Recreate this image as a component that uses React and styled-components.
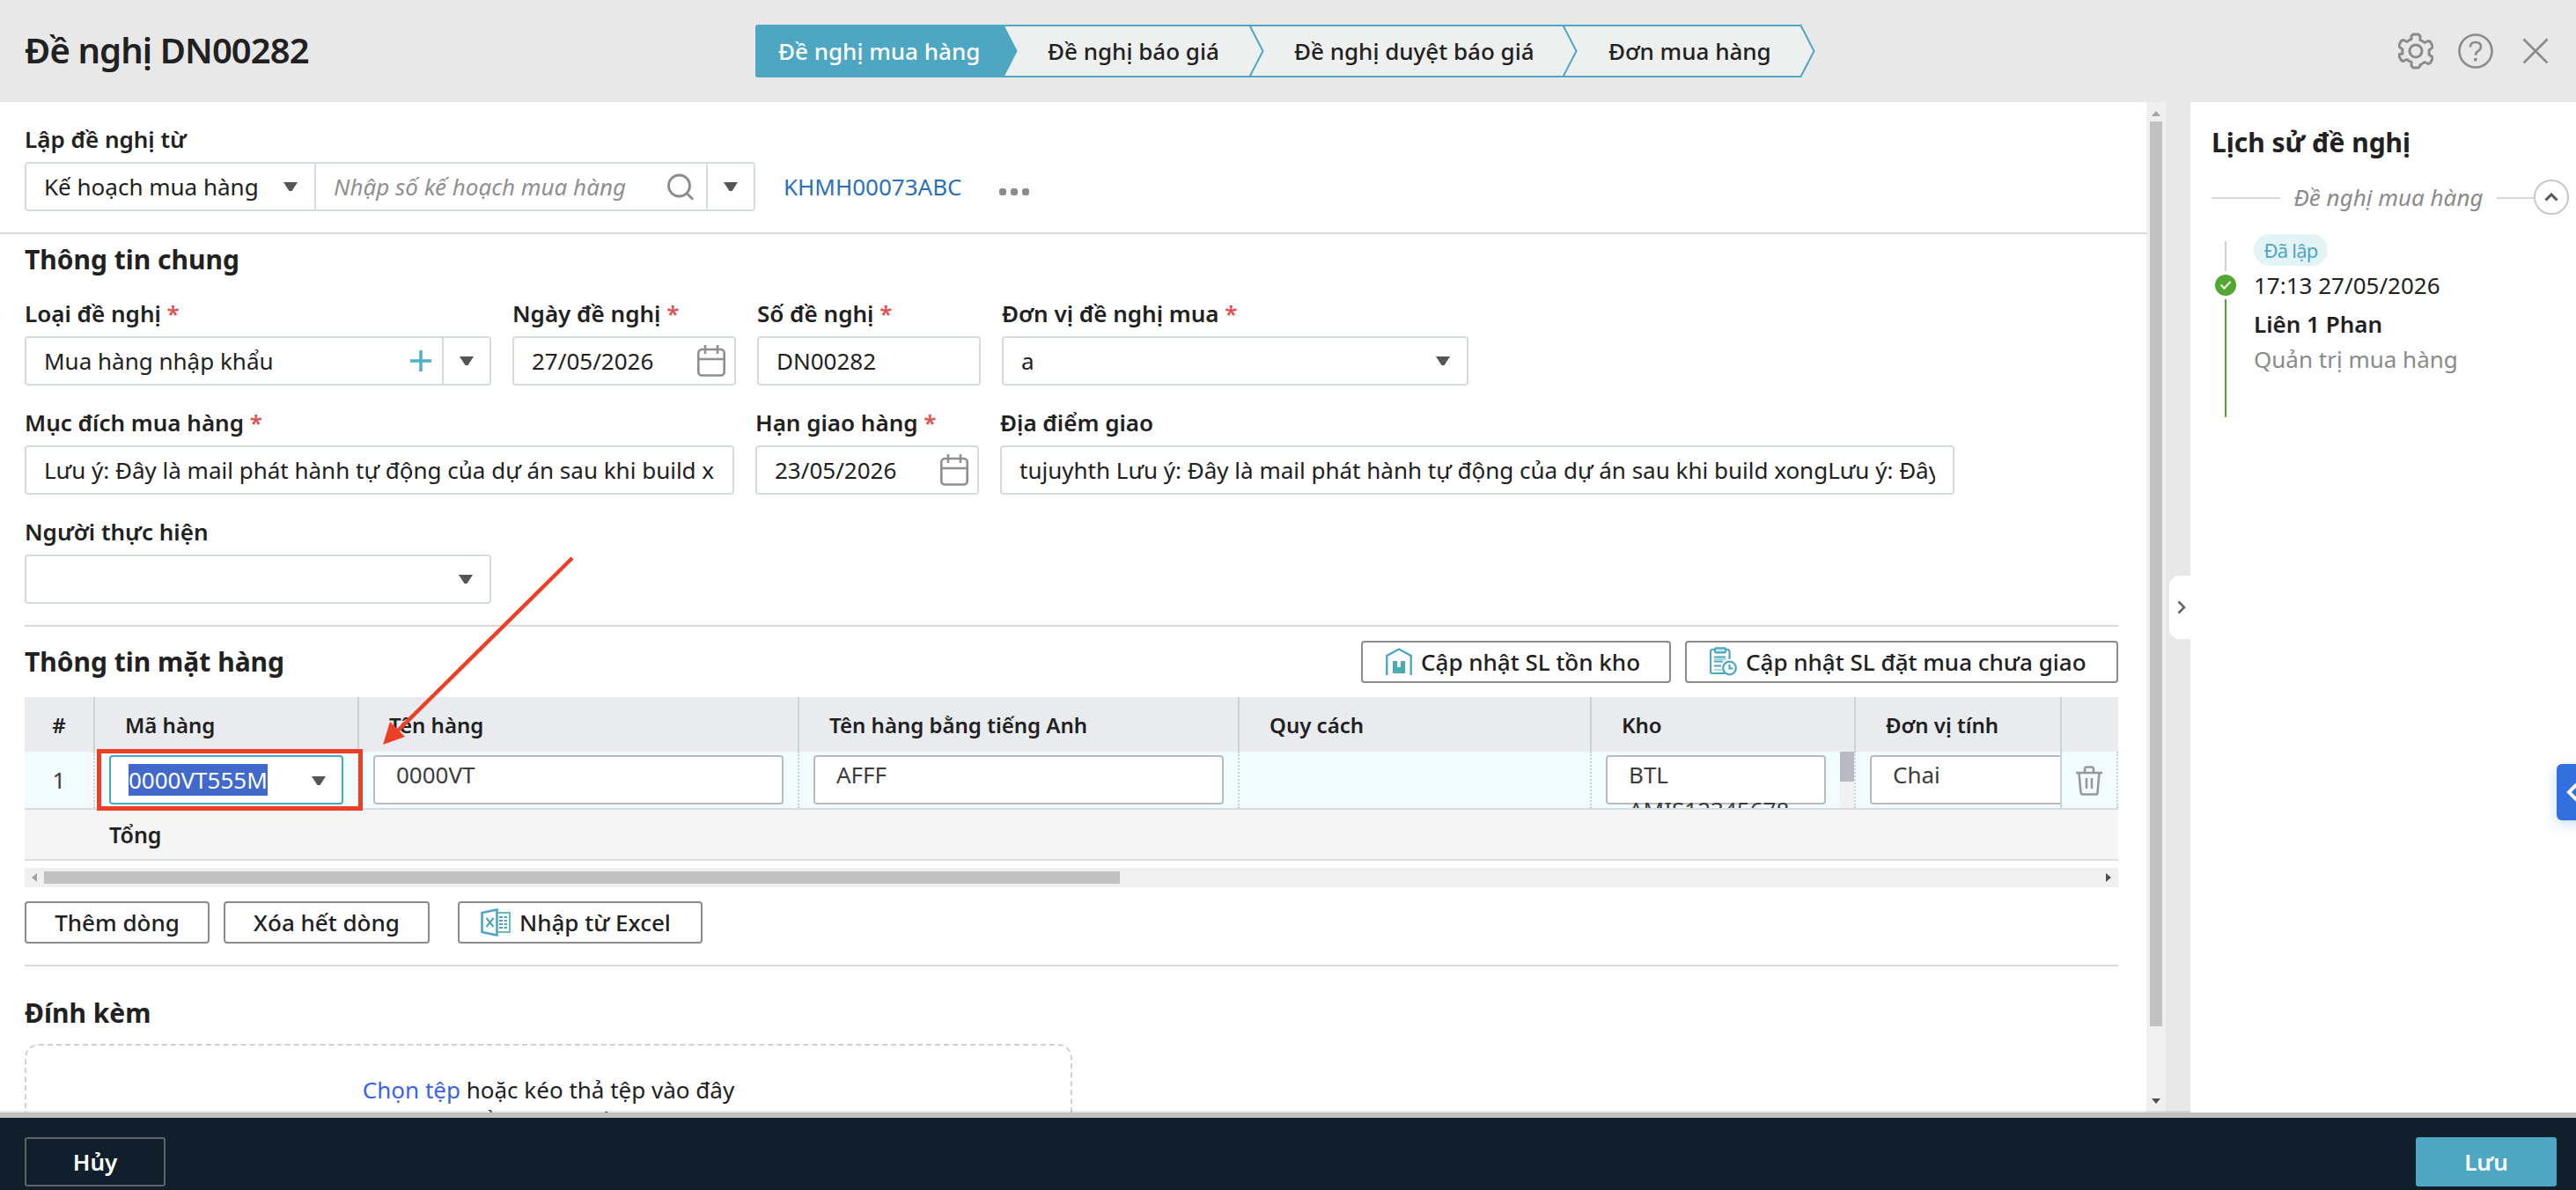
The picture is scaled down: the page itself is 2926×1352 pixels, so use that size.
import React from "react";
import styled, { createGlobalStyle } from "styled-components";

const GlobalStyle = createGlobalStyle`
  * {
    box-sizing: border-box;
  }
  body {
    margin: 0;
    font-family: "Noto Sans", "Open Sans", sans-serif;
    font-size: 26px;
    line-height: 36px;
    color: #212121;
    overflow: hidden;
  }
`;

const Page = styled.div`
  width: 2926px;
  height: 1352px;
  display: flex;
  flex-direction: column;
  background: #e8e8e8;
  position: relative;
  overflow: hidden;
`;

/* ---------- header ---------- */

const Header = styled.header`
  height: 116px;
  flex: none;
  display: flex;
  align-items: center;
  padding: 0 26px 0 28px;
`;

const PageTitle = styled.h1`
  margin: 0;
  width: 830px;
  font-size: 40px;
  line-height: 56px;
  font-weight: 600;
  letter-spacing: -0.9px;
  padding-bottom: 3px;
`;

const Steps = styled.div`
  display: flex;
  height: 60px;
`;

const Step = styled.div`
  width: ${(p) => p.$width}px;
  height: 60px;
  padding-left: ${(p) => p.$pad}px;
  line-height: 57px;
  white-space: nowrap;
  color: ${(p) => (p.$active ? "#fff" : "#212121")};
  font-weight: 500;
  background: ${(p) => (p.$active ? "#4da6c2" : "#eef0ef")};
  border: solid #4da6c2;
  border-width: 2px 0;
  border-radius: ${(p) => (p.$active ? "3px 0 0 3px" : "0")};
`;

const StepTip = styled.svg`
  width: 17px;
  height: 60px;
  flex: none;
  background: ${(p) => p.$bg};
`;

const HeaderIcons = styled.div`
  margin-left: auto;
  display: flex;
  align-items: center;
  gap: 28px;

  svg {
    display: block;
  }
`;

/* ---------- body ---------- */

const Body = styled.div`
  height: 1148px;
  flex: none;
  display: flex;
  overflow: hidden;
`;

const Main = styled.main`
  width: 2438px;
  flex: none;
  background: #fff;
  overflow: hidden;
`;

const SourceSection = styled.section`
  padding: 24px 0 24px 28px;
  border-bottom: 2px solid #dadada;
`;

const Section = styled.section`
  margin: 0 32px 0 28px;
  padding-top: ${(p) => p.$top}px;
  padding-bottom: ${(p) => p.$bottom || 0}px;
  border-bottom: ${(p) => (p.$last ? "none" : "2px solid #dadada")};
`;

const SectionTitle = styled.h2`
  margin: 0;
  font-size: 30px;
  line-height: 40px;
  font-weight: 700;
`;

const FormGrid = styled.div`
  margin-top: 23px;
  display: flex;
  flex-direction: column;
  gap: 24px;
`;

const FormRow = styled.div`
  display: flex;
  gap: ${(p) => p.$gap || 24}px;
`;

const FieldBox = styled.div`
  width: ${(p) => p.$width}px;
`;

const Label = styled.div`
  font-weight: 600;
  margin-bottom: 8px;
  white-space: nowrap;

  span {
    color: #e0504f;
  }
`;

const Control = styled.div`
  width: ${(p) => (p.$width ? p.$width + "px" : "100%")};
  height: 56px;
  display: flex;
  align-items: center;
  border: 2px solid #d5dce0;
  border-radius: ${(p) => p.$radius || "4px"};
  margin-left: ${(p) => p.$shift || 0}px;
  background: #fff;
  padding-left: 20px;
`;

const Value = styled.div`
  flex: 1;
  min-width: 0;
  overflow: hidden;
  white-space: nowrap;
  font-style: ${(p) => (p.$placeholder ? "italic" : "normal")};
  color: ${(p) => (p.$placeholder ? "#8f8f8f" : "#212121")};
  margin-right: ${(p) => p.$right || 0}px;
`;

const CaretCell = styled.div`
  width: 54px;
  height: 52px;
  flex: none;
  display: flex;
  align-items: center;
  justify-content: center;
  border-left: ${(p) => (p.$split ? "2px solid #d5dce0" : "none")};
`;

const IconSlot = styled.div`
  flex: none;
  display: flex;
  margin-right: ${(p) => p.$right || 0}px;
`;

const SourceRow = styled.div`
  display: flex;
  align-items: center;
`;

const PlanLink = styled.a`
  color: #2c70b9;
  margin-left: 32px;
`;

const Dots = styled.div`
  display: flex;
  gap: 5px;
  margin: 12px 0 0 42px;

  i {
    width: 8px;
    height: 8px;
    border-radius: 3px;
    background: #8c8c8c;
  }
`;

/* ---------- items table ---------- */

const SectionHead = styled.div`
  height: 48px;
  display: flex;
  align-items: center;
  justify-content: space-between;
`;

const ButtonRow = styled.div`
  display: flex;
  gap: 16px;
  margin-top: ${(p) => p.$top || 0}px;
`;

const Button = styled.button`
  width: ${(p) => p.$width}px;
  height: 48px;
  margin: 0 0 0 ${(p) => p.$left || 0}px;
  padding: 0 0 0 ${(p) => p.$pad || 0}px;
  display: flex;
  align-items: center;
  justify-content: ${(p) => (p.$pad ? "flex-start" : "center")};
  gap: 10px;
  background: #fff;
  border: 2px solid #8b8b8b;
  border-radius: 4px;
  color: #212121;
  font: 500 26px/36px "Noto Sans", "Open Sans", sans-serif;
  white-space: nowrap;
`;

const Table = styled.div`
  margin-top: 16px;
`;

const TableRow = styled.div`
  display: grid;
  grid-template-columns: 80px 300px 500px 500px 400px 300px 234px 64px;
`;

const HeadCell = styled.div`
  height: 62px;
  line-height: 64px;
  padding-left: ${(p) => (p.$center ? 0 : 34)}px;
  text-align: ${(p) => (p.$center ? "center" : "left")};
  font-weight: 600;
  font-size: 24px;
  background: #e9ebee;
  border-right: ${(p) => (p.$end ? "none" : "2px solid #cbd2d6")};
`;

const Cell = styled.div`
  height: 64px;
  display: flex;
  padding: 4px 0 0 ${(p) => (p.$center ? 0 : 16)}px;
  justify-content: ${(p) => (p.$center ? "center" : "flex-start")};
  line-height: 56px;
  color: #3c3c3c;
  background: #f0fcff;
  border-right: 2px ${(p) => (p.$solid ? "solid" : "dotted")} #cbd2d6;
  overflow: hidden;
`;

const CellInput = styled.div`
  width: ${(p) => p.$width}px;
  height: 56px;
  flex: none;
  padding: ${(p) => (p.$active ? "8px 0 0 20px" : "0 0 0 24px")};
  display: ${(p) => (p.$active ? "flex" : "block")};
  line-height: 40px;
  color: #3c3c3c;
  background: #fff;
  border: 2px solid ${(p) => (p.$active ? "#4da6c2" : "#bbb")};
  border-radius: 4px;
`;

const Selected = styled.span`
  height: 36px;
  line-height: 36px;
  margin-right: auto;
  color: #fff;
  background: #4169cc;
`;

const CellCaret = styled.div`
  margin: 14px 18px 0 0;
  line-height: 0;
`;

const CellScroll = styled.div`
  width: 16px;
  height: 64px;
  margin: -4px 0 0 auto;
  background: #f1f1f1;

  &::before {
    content: "";
    display: block;
    height: 34px;
    background: #b6bac3;
  }
`;

const TotalRow = styled.div`
  height: 60px;
  padding-left: 96px;
  border: solid #d5dce0;
  border-width: 2px 0;
  border-bottom-color: #dedede;
  background: #f5f5f5;
  line-height: 56px;
  font-weight: 600;
  font-size: 25px;
`;

const HScroll = styled.div`
  height: 22px;
  margin-top: 8px;
  background: #f0f0f0;
  display: flex;
  align-items: center;
  padding: 0 8px;
`;

const HThumb = styled.div`
  width: 1222px;
  height: 14px;
  margin: 0 auto 0 8px;
  background: #c1c1c1;
`;

const DropZone = styled.div`
  width: 1190px;
  height: 160px;
  margin-top: 15px;
  padding-top: 32px;
  border: 2px dashed #d0d0d0;
  border-radius: 16px;
  text-align: center;

  a {
    color: #3a62e8;
  }
`;

/* ---------- vertical scrollbar + history panel ---------- */

const VScroll = styled.div`
  width: 22px;
  flex: none;
  background: #f0f0f0;
  display: flex;
  flex-direction: column;
  align-items: center;
  padding: 10px 0;
`;

const VThumb = styled.div`
  width: 14px;
  height: 1028px;
  margin: 6px 0 auto;
  background: #c1c1c1;
`;

const Gutter = styled.div`
  width: 28px;
  flex: none;
  display: flex;
  align-items: flex-start;
  justify-content: flex-end;
  padding-top: 538px;
`;

const CollapseHandle = styled.div`
  width: 24px;
  height: 72px;
  border-radius: 12px 0 0 12px;
  background: #fff;
  display: flex;
  align-items: center;
  padding-left: 9px;
`;

const History = styled.aside`
  flex: 1;
  background: #fff;
  padding: 26px 8px 0 24px;
`;

const HistoryGroup = styled.div`
  height: 40px;
  margin-top: 22px;
  display: flex;
  align-items: center;
  color: #8a8a8a;
  font-style: italic;
  white-space: nowrap;
`;

const Line = styled.div`
  width: ${(p) => p.$width}px;
  height: 2px;
  margin-top: 2px;
  background: #d8d8d8;
`;

const GroupName = styled.div`
  width: 246px;
  text-align: center;
  flex: none;
`;

const CircleButton = styled.div`
  width: 40px;
  height: 40px;
  border: 2px solid #c8c8c8;
  border-radius: 50%;
  display: flex;
  align-items: center;
  justify-content: center;
`;

const Timeline = styled.div`
  display: flex;
  margin-top: 22px;
`;

const Rail = styled.div`
  width: 32px;
  padding-top: 8px;
  display: flex;
  flex-direction: column;
  align-items: center;
  margin-right: 16px;
`;

const RailLine = styled.div`
  width: 2px;
  height: ${(p) => p.$height}px;
  background: ${(p) => p.$color};
`;

const Events = styled.div`
  display: flex;
  flex-direction: column;
  align-items: flex-start;
`;

const Badge = styled.div`
  width: 84px;
  height: 36px;
  border-radius: 18px;
  background: #e4f3f6;
  color: #4da6c2;
  font-size: 22px;
  letter-spacing: -0.8px;
  text-align: center;
`;

const EventLine = styled.div`
  margin-top: ${(p) => p.$top}px;
  font-weight: ${(p) => p.$weight || 400};
  color: ${(p) => p.$color || "#212121"};
`;

/* ---------- footer ---------- */

const Footer = styled.footer`
  height: 88px;
  flex: none;
  border-top: 6px solid #c0c0c0;
  background: #111f2d;
  display: flex;
  justify-content: space-between;
  padding: 22px 22px 0 28px;
`;

const FooterButton = styled.button`
  width: 160px;
  height: 56px;
  border: 2px solid ${(p) => (p.$primary ? "#4da6c2" : "#5d6467")};
  border-radius: 3px;
  background: ${(p) => (p.$primary ? "#4da6c2" : "transparent")};
  color: #fff;
  font: 600 26px/36px "Noto Sans", "Open Sans", sans-serif;
`;

const SideTab = styled.div`
  position: absolute;
  left: 2904px;
  top: 868px;
  width: 40px;
  height: 64px;
  border-radius: 6px;
  background: #3370de;
  box-shadow: 0 4px 16px rgba(51, 112, 222, 0.25);
  display: flex;
  align-items: center;
  padding-left: 9px;
`;

const FooterShade = styled.div`
  position: absolute;
  left: 0;
  top: 1262px;
  width: 2488px;
  height: 2px;
  background: rgba(0, 0, 0, 0.09);
`;

/* red marker drawn over the table */
const Highlight = styled.div`
  position: absolute;
  left: 110px;
  top: 851px;
  width: 302px;
  height: 70px;
  border: 5px solid #ec4026;
`;

const Arrow = styled.svg`
  position: absolute;
  left: 425px;
  top: 625px;
`;

/* ---------- icons ---------- */

const Caret = () => (
  <svg width="16" height="10" viewBox="0 0 16 10">
    <path d="M0 0h16L9.5 10h-3z" fill="#555" />
  </svg>
);

const GearIcon = () => (
  <svg width="40" height="42" viewBox="0 0 40 42" fill="none" stroke="#8b8b8b" strokeWidth="3" strokeLinejoin="round">
    <path d="M17 2h6l2 2v4.500q3 1 5 3l4-2 2.500 1 2.500 4.500-.5 2.500-3.500 2.500q.5 3 0 5l3.500 2.500.5 2.500-2.500 4.500-2.500 1-4-2q-2 2-5 3V38l-2 2h-6l-2-2v-4.500q-3-1-5-3l-4 2-2.500-1-2.500-4.500.5-2.500L5 24q-.5-3 0-5l-3.500-2.500L1 14l2.500-4.500 2.500-1 4 2q2-2 5-3V4z" />
    <circle cx="20" cy="21" r="7" />
  </svg>
);

const HelpIcon = () => (
  <svg width="40" height="40" viewBox="0 0 40 40" fill="none" stroke="#8b8b8b" strokeWidth="2.600">
    <circle cx="20" cy="20" r="18.500" />
    <path d="M14 15.500q0-5.500 6-5.500t6 5q0 3-3 4.800-3 1.700-3 5" />
    <rect x="18.200" y="28" width="3.400" height="3.400" fill="#8b8b8b" stroke="none" />
  </svg>
);

const CloseIcon = () => (
  <svg width="40" height="40" viewBox="0 0 40 40" stroke="#8b8b8b" strokeWidth="2.600">
    <path d="M6.500 6.500l27 27M33.500 6.500l-27 27" />
  </svg>
);

const SearchIcon = () => (
  <svg width="32" height="32" viewBox="0 0 32 32" fill="none" stroke="#8b8b8b" strokeWidth="2.800">
    <circle cx="14.500" cy="15" r="12" />
    <path d="M23 23.500l7 7" />
  </svg>
);

const PlusIcon = () => (
  <svg width="24" height="24" viewBox="0 0 24 24" stroke="#4fb0c8" strokeWidth="3.500">
    <path d="M12 0v24M0 12h24" />
  </svg>
);

const CalendarIcon = () => (
  <svg width="32" height="36" viewBox="0 0 32 36" fill="none" stroke="#8f8f8f" strokeWidth="2.600">
    <rect x="1.300" y="5" width="29.400" height="29.500" rx="4" />
    <path d="M1 16h30M9 0v10M23 0v10" />
  </svg>
);

const TrashIcon = () => (
  <svg width="30" height="50" viewBox="0 -12 30 50" fill="none" stroke="#999" strokeWidth="2.600">
    <path d="M0 8h30M10 8V4q0-2.500 2.500-2.500h5Q20 1.500 20 4v4M3.500 8l2 22.500q.2 2 2 2h15q1.800 0 2-2l2-22.500M12 14v12M18 14v12" />
  </svg>
);

const WarehouseIcon = () => (
  <svg width="30" height="32" viewBox="0 0 30 32">
    <path d="M1.300 31V9L15 1.500 28.700 9v22" fill="none" stroke="#4da6c2" strokeWidth="2.400" />
    <path d="M8 15h5v7h4v-7h5v14H8z" fill="#4baab0" />
  </svg>
);

const ClipboardIcon = () => (
  <svg width="31" height="34" viewBox="0 0 31 34" fill="none" stroke="#4da6c2" strokeWidth="2.200">
    <path d="M17 30H3q-2 0-2-2V5q0-2 2-2h17q2.500 0 2.500 2v9" />
    <rect x="6" y="1.300" width="12" height="5" rx="1" fill="#c9e8f0" />
    <path d="M5 11.500h13M5 16.500h10M5 21.500h8" />
    <path d="M5 14h14M5 26h9" stroke="#a9d8e6" />
    <circle cx="22.500" cy="24" r="7.300" fill="#fff" />
    <path d="M22.500 20v4.500h4" />
  </svg>
);

const ExcelIcon = () => (
  <svg width="34" height="32" viewBox="0 0 34 32" fill="none" stroke="#4da6c2">
    <path d="M1.500 5L18.500 1.500v29L1.500 27z" strokeWidth="2.600" />
    <path d="M19 5h14v22H19" strokeWidth="2" stroke="#6cb8c8" />
    <path d="M6.500 11l8 10M14.500 11l-8 10" strokeWidth="2.200" />
    <path d="M21 10h9M21 14h9M21 18h9M21 22h9" strokeWidth="2" strokeDasharray="4 1.500" />
  </svg>
);

const CheckDot = () => (
  <svg width="24" height="32" viewBox="0 -4 24 32">
    <circle cx="12" cy="12" r="12" fill="#54a634" />
    <path d="M6.500 11.500l4 4 7-7.500" fill="none" stroke="#dff5d6" strokeWidth="2.400" />
  </svg>
);

const ScrollArrow = ({ dir, color }) => {
  const points = {
    up: "0,6 5,0 10,6",
    down: "0,0 10,0 5,6",
    left: "6,0 0,5 6,10",
    right: "0,0 6,5 0,10",
  };
  const vertical = dir === "up" || dir === "down";
  return (
    <svg width={vertical ? 10 : 6} height={vertical ? 6 : 10}>
      <polygon points={points[dir]} fill={color} />
    </svg>
  );
};

/* ---------- data ---------- */

const steps = [
  { name: "Đề nghị mua hàng", width: 281, pad: 26, active: true },
  { name: "Đề nghị báo giá", width: 263, pad: 34 },
  { name: "Đề nghị duyệt báo giá", width: 339, pad: 34 },
  { name: "Đơn mua hàng", width: 253, pad: 35 },
];

const columns = ["Mã hàng", "Tên hàng", "Tên hàng bằng tiếng Anh", "Quy cách", "Kho", "Đơn vị tính"];

const Field = ({ label, required, width, children }) => (
  <FieldBox $width={width}>
    <Label>
      {label} {required && <span>*</span>}
    </Label>
    {children}
  </FieldBox>
);

const App = () => {
  return (
    <Page>
      <GlobalStyle />
      <Header>
        <PageTitle>Đề nghị DN00282</PageTitle>
        <Steps>
          {steps.map((step, i) => (
            <React.Fragment key={step.name}>
              <Step $width={step.width} $pad={step.pad} $active={step.active}>
                {step.name}
              </Step>
              <StepTip $bg={i < steps.length - 1 ? "#eef0ef" : "transparent"} viewBox="0 0 17 60">
                {i < steps.length - 1 && <path d="M0 1h17M0 59h17" stroke="#4da6c2" strokeWidth="2" />}
                <path d="M0 0l15.500 30L0 60" fill={step.active ? "#4da6c2" : "#eef0ef"} stroke="#4da6c2" strokeWidth="2" />
              </StepTip>
            </React.Fragment>
          ))}
        </Steps>
        <HeaderIcons>
          <GearIcon />
          <HelpIcon />
          <CloseIcon />
        </HeaderIcons>
      </Header>

      <Body>
        <Main>
          <SourceSection>
            <Label>Lập đề nghị từ</Label>
            <SourceRow>
              <Control $width={331} $radius="4px 0 0 4px">
                <Value>Kế hoạch mua hàng</Value>
                <CaretCell>
                  <Caret />
                </CaretCell>
              </Control>
              <Control $width={501} $radius="0 4px 4px 0" $shift={-2}>
                <Value $placeholder>Nhập số kế hoạch mua hàng</Value>
                <IconSlot $right={13}>
                  <SearchIcon />
                </IconSlot>
                <CaretCell $split>
                  <Caret />
                </CaretCell>
              </Control>
              <PlanLink>KHMH00073ABC</PlanLink>
              <Dots>
                <i />
                <i />
                <i />
              </Dots>
            </SourceRow>
          </SourceSection>

          <Section $top={9} $bottom={24}>
            <SectionTitle>Thông tin chung</SectionTitle>
            <FormGrid>
              <FormRow>
                <Field label="Loại đề nghị" required width={530}>
                  <Control>
                    <Value>Mua hàng nhập khẩu</Value>
                    <IconSlot $right={12}>
                      <PlusIcon />
                    </IconSlot>
                    <CaretCell $split>
                      <Caret />
                    </CaretCell>
                  </Control>
                </Field>
                <Field label="Ngày đề nghị" required width={254}>
                  <Control>
                    <Value>27/05/2026</Value>
                    <IconSlot $right={10}>
                      <CalendarIcon />
                    </IconSlot>
                  </Control>
                </Field>
                <Field label="Số đề nghị" required width={254}>
                  <Control>
                    <Value>DN00282</Value>
                  </Control>
                </Field>
                <Field label="Đơn vị đề nghị mua" required width={530}>
                  <Control>
                    <Value>a</Value>
                    <CaretCell>
                      <Caret />
                    </CaretCell>
                  </Control>
                </Field>
              </FormRow>
              <FormRow>
                <Field label="Mục đích mua hàng" required width={806}>
                  <Control>
                    <Value $right={20}>Lưu ý: Đây là mail phát hành tự động của dự án sau khi build x</Value>
                  </Control>
                </Field>
                <Field label="Hạn giao hàng" required width={254}>
                  <Control>
                    <Value>23/05/2026</Value>
                    <IconSlot $right={10}>
                      <CalendarIcon />
                    </IconSlot>
                  </Control>
                </Field>
                <Field label="Địa điểm giao" width={1084}>
                  <Control>
                    <Value $right={20}>
                      tujuyhth Lưu ý: Đây là mail phát hành tự động của dự án sau khi build xongLưu ý: Đây
                    </Value>
                  </Control>
                </Field>
              </FormRow>
              <FormRow>
                <Field label="Người thực hiện" width={530}>
                  <Control>
                    <Value />
                    <CaretCell>
                      <Caret />
                    </CaretCell>
                  </Control>
                </Field>
              </FormRow>
            </FormGrid>
          </Section>

          <Section $top={16} $bottom={24}>
            <SectionHead>
              <SectionTitle>Thông tin mặt hàng</SectionTitle>
              <ButtonRow>
                <Button $width={352} $pad={26}>
                  <WarehouseIcon />
                  Cập nhật SL tồn kho
                </Button>
                <Button $width={492} $pad={26}>
                  <ClipboardIcon />
                  Cập nhật SL đặt mua chưa giao
                </Button>
              </ButtonRow>
            </SectionHead>

            <Table>
              <TableRow>
                <HeadCell $center>#</HeadCell>
                {columns.map((name) => (
                  <HeadCell key={name}>{name}</HeadCell>
                ))}
                <HeadCell $end />
              </TableRow>
              <TableRow>
                <Cell $center>1</Cell>
                <Cell>
                  <CellInput $width={266} $active>
                    <Selected>0000VT555M</Selected>
                    <CellCaret>
                      <Caret />
                    </CellCaret>
                  </CellInput>
                </Cell>
                <Cell>
                  <CellInput $width={466}>0000VT</CellInput>
                </Cell>
                <Cell>
                  <CellInput $width={466}>AFFF</CellInput>
                </Cell>
                <Cell />
                <Cell>
                  <CellInput $width={250}>
                    BTL
                    <br />
                    AMIS12345678
                  </CellInput>
                  <CellScroll />
                </Cell>
                <Cell $solid>
                  <CellInput $width={260}>Chai</CellInput>
                </Cell>
                <Cell $center>
                  <IconSlot>
                    <TrashIcon />
                  </IconSlot>
                </Cell>
              </TableRow>
              <TotalRow>Tổng</TotalRow>
            </Table>

            <HScroll>
              <ScrollArrow dir="left" color="#a3a3a3" />
              <HThumb />
              <ScrollArrow dir="right" color="#505050" />
            </HScroll>

            <ButtonRow $top={16}>
              <Button $width={210}>Thêm dòng</Button>
              <Button $width={234}>Xóa hết dòng</Button>
              <Button $width={278} $left={16} $pad={24}>
                <ExcelIcon />
                Nhập từ Excel
              </Button>
            </ButtonRow>
          </Section>

          <Section $top={33} $last>
            <SectionTitle>Đính kèm</SectionTitle>
            <DropZone>
              <a>Chọn tệp</a> hoặc kéo thả tệp vào đây
              <br />* Tổng cộng tối đa
            </DropZone>
          </Section>
        </Main>

        <VScroll>
          <ScrollArrow dir="up" color="#a3a3a3" />
          <VThumb />
          <ScrollArrow dir="down" color="#505050" />
        </VScroll>
        <Gutter>
          <CollapseHandle>
            <svg width="10" height="16" viewBox="0 0 10 16">
              <path d="M1.500 1.500L8 8l-6.500 6.500" fill="none" stroke="#666" strokeWidth="2.600" />
            </svg>
          </CollapseHandle>
        </Gutter>

        <History>
          <SectionTitle>Lịch sử đề nghị</SectionTitle>
          <HistoryGroup>
            <Line $width={78} />
            <GroupName>Đề nghị mua hàng</GroupName>
            <Line $width={42} />
            <CircleButton>
              <svg width="16" height="10" viewBox="0 0 16 10">
                <path d="M1.500 8.500L8 2l6.500 6.500" fill="none" stroke="#555" strokeWidth="3" />
              </svg>
            </CircleButton>
          </HistoryGroup>
          <Timeline>
            <Rail>
              <RailLine $height={34} $color="#cbd2d6" />
              <CheckDot />
              <RailLine $height={134} $color="#54a634" />
            </Rail>
            <Events>
              <Badge>Đã lập</Badge>
              <EventLine $top={4}>17:13 27/05/2026</EventLine>
              <EventLine $top={8} $weight={600}>
                Liên 1 Phan
              </EventLine>
              <EventLine $top={4} $color="#8a8a8a">
                Quản trị mua hàng
              </EventLine>
            </Events>
          </Timeline>
        </History>
      </Body>

      <Footer>
        <FooterButton>Hủy</FooterButton>
        <FooterButton $primary>Lưu</FooterButton>
      </Footer>

      <FooterShade />
      <SideTab>
        <svg width="16" height="24" viewBox="0 0 16 24">
          <path d="M14 3L5 12l9 9" fill="none" stroke="#fff" strokeWidth="4" />
        </svg>
      </SideTab>
      <Highlight />
      <Arrow width="230" height="225" viewBox="0 0 230 225">
        <path d="M225 9L24 208" stroke="#ec4026" strokeWidth="4.500" />
        <path d="M10 221l8-26 17 17z" fill="#ec4026" />
      </Arrow>
    </Page>
  );
};

export default App;
